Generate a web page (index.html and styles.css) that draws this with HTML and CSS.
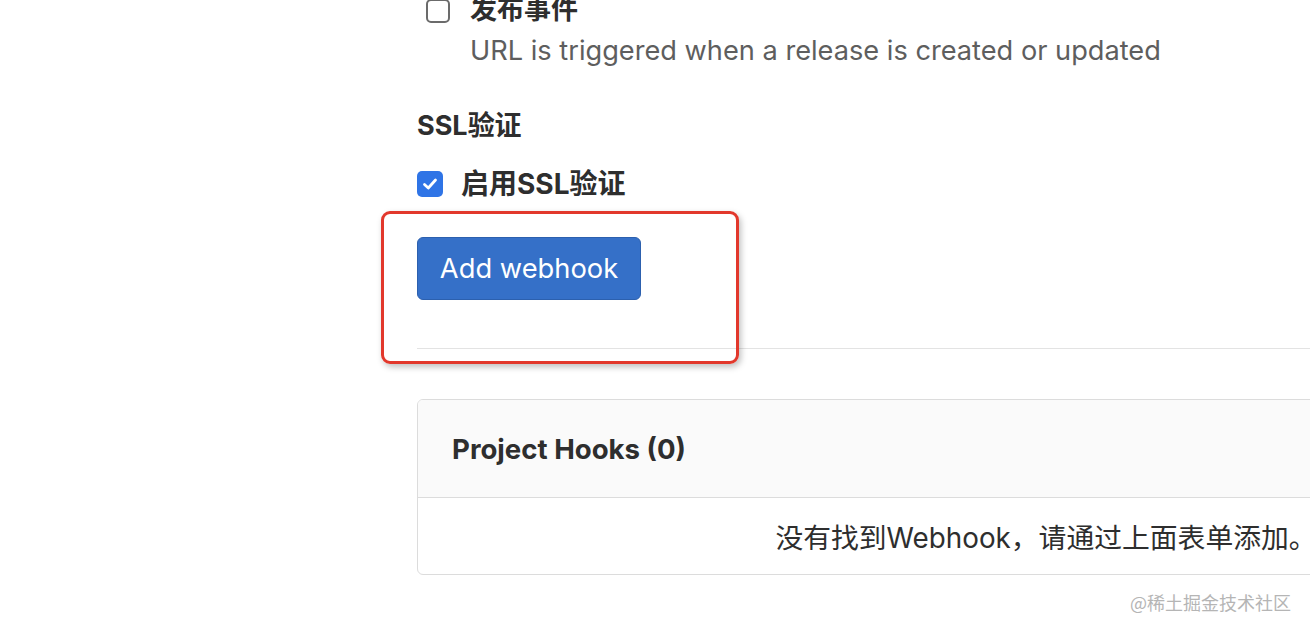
FILE: index.html
```html
<!DOCTYPE html>
<html lang="zh-CN">
<head>
<meta charset="utf-8">
<link rel="stylesheet" href="styles.css">
</head>
<body>
<div class="page">
  <div class="trigger">
    <span class="box"></span>
    <div class="trigger-text">
      <div class="trigger-label">发布事件</div>
      <div class="help">URL is triggered when a release is created or updated</div>
    </div>
  </div>

  <div class="section-title">SSL验证</div>
  <div class="ssl-row">
    <span class="box checked">
      <svg width="18" height="18" viewBox="0 0 18 18"><path d="M3.5 9.5 L7.3 13 L14.5 5" fill="none" stroke="#fff" stroke-width="2.8" stroke-linecap="round" stroke-linejoin="round"/></svg>
    </span>
    <span class="ssl-label">启用SSL验证</span>
  </div>

  <div class="actions">
    <button class="btn">Add webhook</button>
    <div class="highlight"></div>
  </div>
  <hr class="divider">

  <div class="card">
    <div class="card-header">Project Hooks (0)</div>
    <div class="card-body">没有找到Webhook，请通过上面表单添加。</div>
  </div>
</div>
<div class="watermark">@稀土掘金技术社区</div>
</body>
</html>
```

FILE: styles.css
```css
html, body {
  margin: 0;
  padding: 0;
  width: 1310px;
  height: 630px;
  overflow: hidden;
  background: #fff;
}
body {
  font-family: "Inter", "Noto Sans CJK SC", sans-serif;
  color: #303030;
  position: relative;
}
.page {
  margin-left: 417px;
  margin-top: -14px;
}
.trigger {
  display: flex;
  align-items: flex-start;
  margin-left: 9px;
  gap: 20px;
}
.box {
  box-sizing: border-box;
  width: 24px;
  height: 24px;
  border: 2px solid #6b6b6b;
  border-radius: 5px;
  flex: none;
  margin-top: 13px;
  display: flex;
  align-items: center;
  justify-content: center;
}
.box.checked {
  width: 26px;
  height: 26px;
  border: none;
  background: #2f74e6;
  margin-top: 0;
}
.trigger-label {
  font-size: 27px;
  font-weight: bold;
  line-height: 48px;
  color: #2e2e2e;
}
.help {
  font-size: 27.2px;
  line-height: 34px;
  color: #5e5e5e;
}
.section-title {
  font-size: 27px;
  font-weight: bold;
  line-height: 34px;
  margin-top: 41px;
  color: #2e2e2e;
}
.ssl-row {
  display: flex;
  align-items: center;
  gap: 18px;
  margin-top: 26px;
}
.ssl-label {
  font-size: 28px;
  font-weight: bold;
  line-height: 30px;
  color: #2e2e2e;
}
.actions {
  position: relative;
  margin-top: 38px;
  height: 111px;
}
.btn {
  box-sizing: border-box;
  width: 224px;
  height: 63px;
  background: #3570c8;
  border: 1px solid #2c60ae;
  border-radius: 6px;
  color: #fff;
  font-family: "Inter", sans-serif;
  font-size: 27.3px;
  padding: 0;
}
.highlight {
  position: absolute;
  left: -36px;
  top: -26px;
  width: 358px;
  height: 153px;
  box-sizing: border-box;
  border: 3px solid #e2382c;
  border-radius: 9px;
  box-shadow: 2px 3px 6px rgba(0,0,0,0.25);
  z-index: 2;
}
.divider {
  border: none;
  border-top: 1px solid #e3e3e3;
  margin: 0;
  width: 1000px;
}
.card {
  margin-top: 50px;
  width: 1256px;
  border: 1px solid #dcdcdc;
  border-radius: 6px;
  overflow: hidden;
}
.card-header {
  background: #fafafa;
  height: 98px;
  box-sizing: border-box;
  border-bottom: 1px solid #dcdcdc;
  padding-left: 34px;
  display: flex;
  align-items: center;
  font-size: 27.6px;
  font-weight: bold;
  color: #2e2e2e;
}
.card-body {
  height: 76px;
  display: flex;
  align-items: center;
  justify-content: center;
  font-size: 27.8px;
  color: #2e2e2e;
}
.watermark {
  position: absolute;
  left: 1130px;
  top: 589px;
  font-size: 18px;
  color: #b5b5b5;
  font-family: "Noto Sans CJK SC", sans-serif;
}
```
